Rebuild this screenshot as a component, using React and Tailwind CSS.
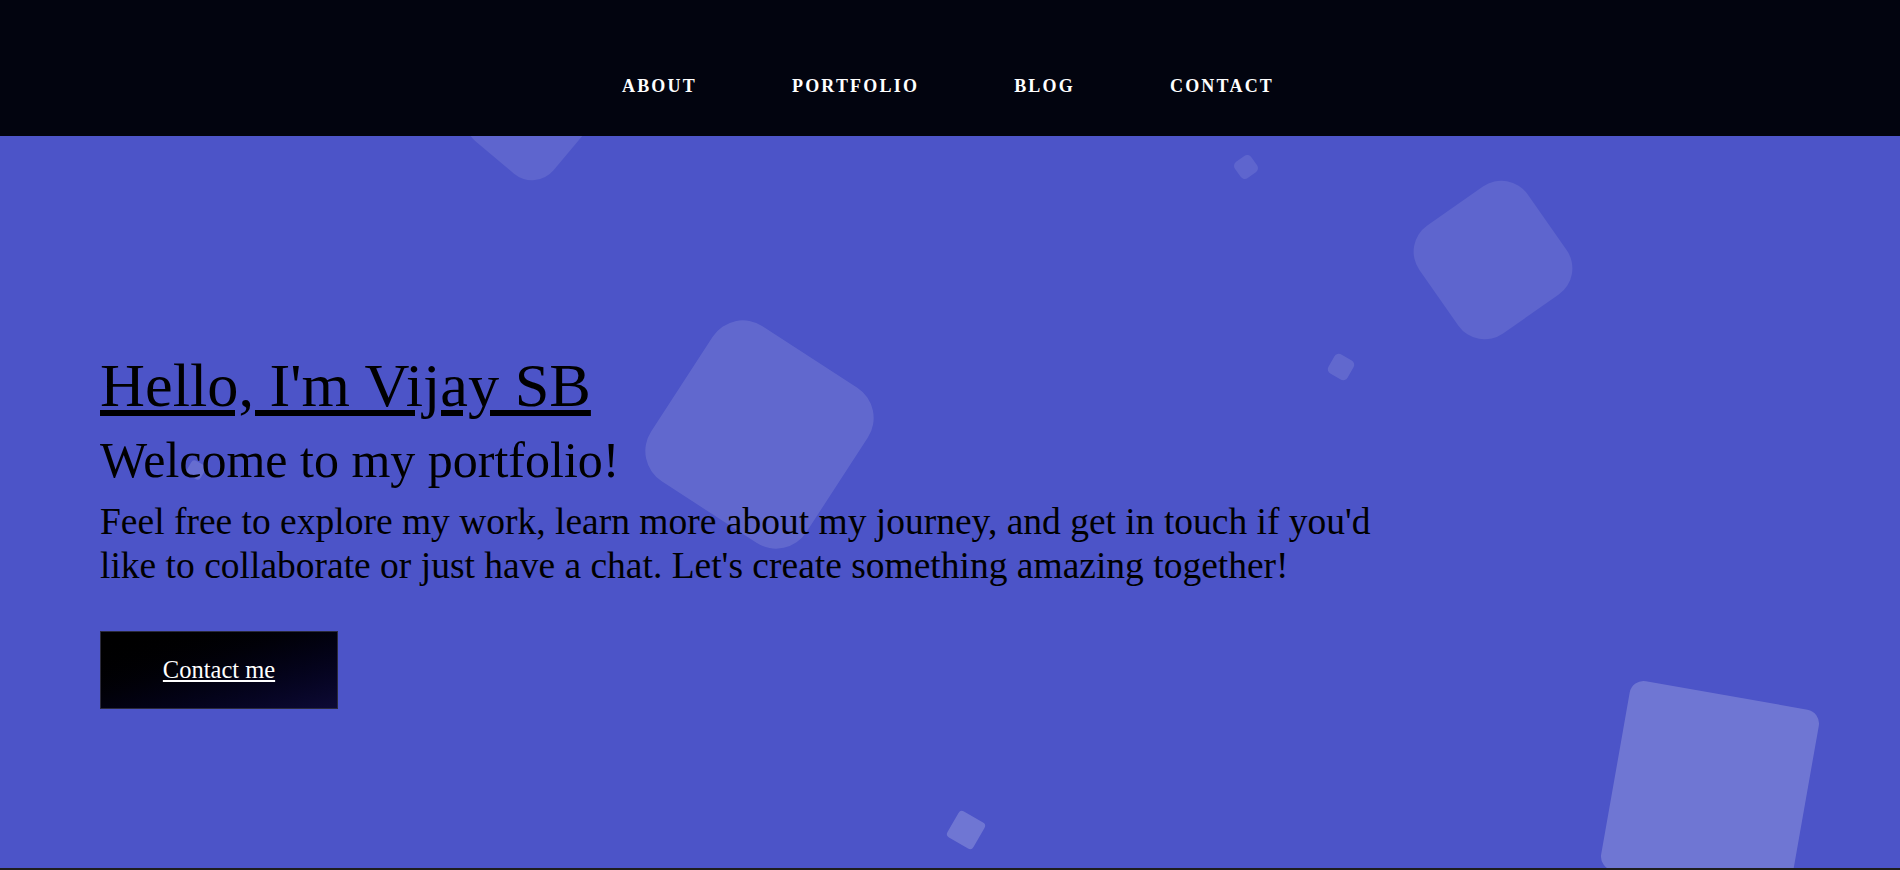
import React from 'react';

const links = ['ABOUT', 'PORTFOLIO', 'BLOG', 'CONTACT'];

// decorative floating squares in the hero
const squares = [
  'left-[476px] top-[-72px] w-[106px] h-[106px] rounded-[28px] rotate-[40deg] bg-white/10',
  'left-[667px] top-[206px] w-[185px] h-[185px] rounded-[36px] rotate-[33deg] bg-white/12',
  'left-[1427px] top-[58px] w-[132px] h-[132px] rounded-[32px] rotate-[55deg] bg-white/10',
  'left-[1236px] top-[21px] w-[20px] h-[20px] rounded-[5px] rotate-[-35deg] bg-white/10',
  'left-[1330px] top-[220px] w-[22px] h-[22px] rounded-[5px] rotate-[30deg] bg-white/12',
  'left-[188px] top-[326px] w-[16px] h-[16px] rounded-[4px] rotate-[30deg] bg-white/15',
  'left-[951px] top-[679px] w-[30px] h-[30px] rounded-[4px] rotate-[30deg] bg-white/20',
  'left-[1614px] top-[558px] w-[192px] h-[192px] rounded-[14px] rotate-[10deg] bg-white/20',
];

const App = () => {
  return (
    <div className="min-h-screen bg-[#1e1e1e] font-['Liberation_Serif',serif]">
      <nav className="h-[136px] bg-[#02040f] flex justify-center items-start pt-[75px]">
        <ul className="flex gap-[95px] pr-[4px]">
          {links.map((item) => (
            <li key={item}>
              <a href="#" className="text-white font-bold text-[18px] leading-[20px] tracking-[2.2px]">
                {item}
              </a>
            </li>
          ))}
        </ul>
      </nav>

      <section className="relative h-[732px] overflow-hidden bg-[#4c54c8]">
        {squares.map((cls, i) => (
          <div key={i} className={'absolute ' + cls} />
        ))}

        <div className="relative z-10 flex flex-col items-start pl-[100px] pt-[213px] text-black">
          <h1 className="text-[62.3px] leading-[71px] underline">Hello, I'm Vijay SB</h1>
          <h2 className="mt-[12px] text-[50px] leading-[57px]">Welcome to my portfolio!</h2>
          <p className="mt-[11px] max-w-[1320px] text-[37.5px] leading-[43.6px]">
            Feel free to explore my work, learn more about my journey, and get in touch if you'd like to
            collaborate or just have a chat. Let's create something amazing together!
          </p>
          <a
            href="#"
            className="mt-[44px] w-[238px] h-[78px] flex items-center justify-center border border-[#2a2a3c] bg-gradient-to-br from-black to-[#0d0a35] text-white text-[24.5px] underline"
          >
            Contact me
          </a>
        </div>
      </section>

      <section className="h-[300px] bg-[#1e1e1e]" />
    </div>
  );
};

export default App;
